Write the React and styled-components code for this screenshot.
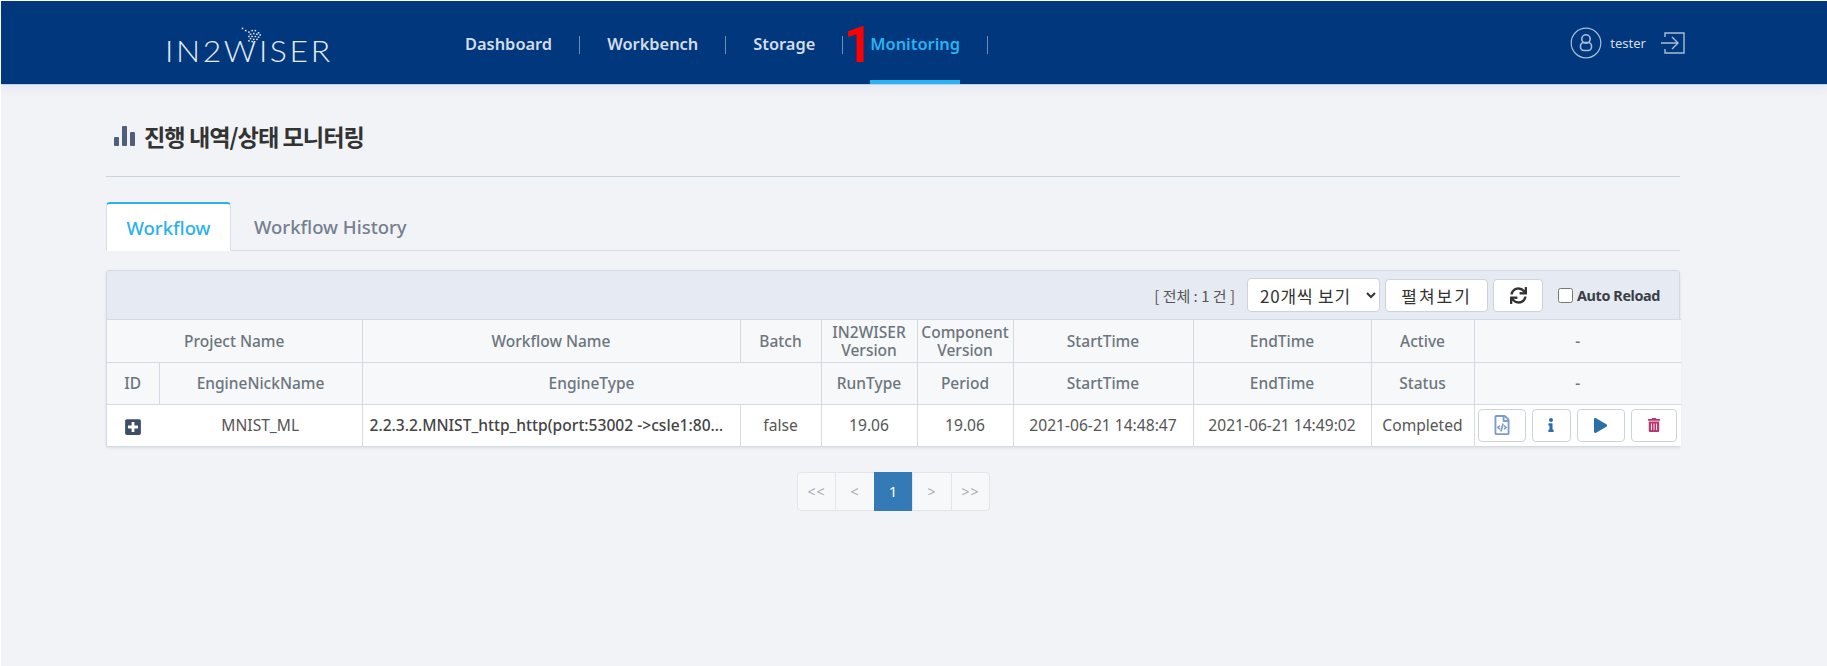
import React from 'react';
import styled, { createGlobalStyle } from 'styled-components';
import { FaSync, FaPlusSquare, FaInfo, FaPlay, FaTrashAlt, FaRegFileCode } from 'react-icons/fa';

const GlobalStyle = createGlobalStyle`
  html, body {
    margin: 0;
    padding: 0;
    background: #f1f3f7;
  }
  body {
    font-family: "Noto Sans", "Noto Sans CJK KR", sans-serif;
    font-size: 15px;
    color: #555;
  }
`;

const Page = styled.div`
  min-height: 666px;
  box-sizing: border-box;
  border-top: 1px solid #fff;
  border-left: 1px solid #fff;
`;

const Header = styled.header`
  height: 83px;
  background: #00377d;
  display: flex;
  align-items: stretch;
  padding-right: 142px;
  box-shadow: 0 1px 0 #b9d4ee, 0 6px 10px rgba(40, 60, 90, 0.05);
`;

const LogoBox = styled.div`
  width: 464px;
  padding-left: 164px;
  box-sizing: border-box;
  display: flex;
  align-items: center;
`;

const Logo = styled.div`
  position: relative;
  margin-top: 16px;
  color: #e6edf5;
  font-family: "Lato", sans-serif;
  font-weight: 300;
  font-size: 29px;
  line-height: 29px;
  letter-spacing: 2.4px;
  transform: scaleX(1.1);
  transform-origin: left center;
  white-space: nowrap;

  svg {
    position: absolute;
    left: 69px;
    top: -11px;
  }
`;

const Nav = styled.nav`
  display: flex;
  align-items: stretch;
  position: relative;
  flex: 1;
`;

const NavItem = styled.a`
  position: relative;
  display: flex;
  align-items: center;
  height: 100%;
  margin-right: 55px;
  padding-top: 6px;
  box-sizing: border-box;
  color: ${p => (p.$active ? '#2cb2f0' : '#d4dce8')};
  font-size: 16.4px;
  font-weight: 600;
  white-space: nowrap;
  border-bottom: 4px solid ${p => (p.$active ? '#2cb2f0' : 'transparent')};

  &::after {
    content: '';
    position: absolute;
    right: -28px;
    top: 35px;
    width: 1px;
    height: 18px;
    background: #6f8db4;
  }
`;

const Marker = styled.span`
  position: absolute;
  left: 379px;
  top: 14px;
  color: #f00;
  font-family: "Roboto", sans-serif;
  font-weight: 700;
  font-size: 50px;
  line-height: 60px;
`;

const UserBox = styled.div`
  display: flex;
  align-items: center;
  gap: 8px;
  color: #d4dce8;
  font-size: 13px;
`;

const Tester = styled.span`
  margin-right: 7px;
`;

const Main = styled.main`
  width: 1574px;
  margin-left: 105px;
`;

const TitleRow = styled.div`
  height: 93px;
  box-sizing: border-box;
  border-bottom: 1px solid #c9d4e0;
  display: flex;
  align-items: center;
  gap: 9px;
  padding: 11px 0 0 8px;
`;

const Title = styled.h2`
  margin: 0;
  font-family: "Noto Sans CJK KR", sans-serif;
  font-size: 23.2px;
  font-weight: 700;
  letter-spacing: -1px;
  color: #333;
`;

const Tabs = styled.div`
  display: flex;
  margin-top: 25px;
  height: 48px;
  border-bottom: 1px solid #d6dde6;
`;

const Tab = styled.div`
  box-sizing: border-box;
  height: ${p => (p.$active ? '49px' : '48px')};
  width: ${p => (p.$active ? '125px' : 'auto')};
  padding: 0 ${p => (p.$active ? '0' : '23px')};
  display: flex;
  align-items: center;
  justify-content: center;
  font-size: 18.5px;
  font-weight: 500;
  color: ${p => (p.$active ? '#2ab0ee' : '#757f8e')};
  background: ${p => (p.$active ? '#fff' : 'transparent')};
  border: ${p => (p.$active ? '1px solid #d6dde6' : 'none')};
  border-top: ${p => (p.$active ? '2px solid #2ab0ee' : 'none')};
  border-bottom: ${p => (p.$active ? '1px solid #fff' : 'none')};
  border-radius: 4px 4px 0 0;
`;

const Panel = styled.section`
  margin-top: 19px;
  border: 1px solid #d3dae3;
  border-radius: 3px 3px 0 0;
  box-shadow: 0 1px 3px rgba(60, 80, 110, 0.12);
  background: #fff;
`;

const Toolbar = styled.div`
  height: 48px;
  background: #e6eaf2;
  display: flex;
  align-items: center;
  justify-content: flex-end;
  padding-right: 19px;
`;

const Total = styled.span`
  font-family: "Noto Sans CJK KR", sans-serif;
  font-size: 15px;
  color: #555;
  margin-right: 12px;
`;

const PageSize = styled.select`
  width: 133px;
  height: 34px;
  border: 1px solid #ccd3dc;
  border-radius: 4px;
  background: #fff;
  padding: 0 0 0 8px;
  margin-right: 5px;
  font-family: "Noto Sans CJK KR", sans-serif;
  font-size: 17px;
  letter-spacing: 0.8px;
  color: #333;
`;

const ToolButton = styled.button`
  width: ${p => p.$width}px;
  height: 33px;
  border: 1px solid #ccd3dc;
  border-radius: 4px;
  background: #fff;
  padding: 0;
  margin-right: 5px;
  display: flex;
  align-items: center;
  justify-content: center;
  font-family: "Noto Sans CJK KR", sans-serif;
  font-size: 17px;
  letter-spacing: 2px;
  color: #333;
`;

const ReloadLabel = styled.label`
  display: flex;
  align-items: center;
  margin-left: 10px;
  font-size: 14.4px;
  font-weight: 700;
  letter-spacing: -0.4px;
  color: #3a3f46;

  input {
    width: 15px;
    height: 15px;
    margin: 0 4px 0 0;
  }
`;

const Table = styled.table`
  width: 100%;
  table-layout: fixed;
  border-collapse: collapse;
`;

const Th = styled.th`
  height: ${p => p.$height}px;
  padding: 1px 0 0;
  box-sizing: border-box;
  background: #f6f8f9;
  border: 1px solid #d3dae3;
  font-size: 15.5px;
  line-height: 17.5px;
  font-weight: 500;
  color: #6c757d;
  text-align: center;
  &:first-child { border-left: none; }
  &:last-child { border-right: none; }
`;

const Td = styled.td`
  height: 41px;
  padding: 0 ${p => (p.$left ? '13px' : '0')} 0 ${p => (p.$left ? '7px' : '0')};
  box-sizing: border-box;
  background: #fff;
  border: 1px solid #d3dae3;
  border-bottom: none;
  font-size: 15.6px;
  color: ${p => (p.$strong ? '#444' : '#555')};
  font-weight: ${p => (p.$strong ? 500 : 400)};
  text-align: ${p => (p.$left ? 'left' : 'center')};
  white-space: nowrap;
  overflow: hidden;
  text-overflow: ellipsis;
  &:first-child { border-left: none; border-right: none; }
  &:nth-child(2) { border-left: none; }
  &:last-child { border-right: none; }
`;

const Actions = styled.div`
  display: flex;
  align-items: center;
  gap: 6px;
  padding-left: 3px;
`;

const ActionButton = styled.button`
  width: ${p => p.$width}px;
  height: 33px;
  flex: none;
  padding: 0;
  border: 1px solid #ccd3dc;
  border-radius: 4px;
  background: #fff;
  display: flex;
  align-items: center;
  justify-content: center;
  color: ${p => p.$color};
`;

const Pagination = styled.ul`
  list-style: none;
  margin: 25px 0 0;
  padding: 0;
  display: flex;
  justify-content: center;
  transform: translateX(1px);
`;

const PageItem = styled.li`
  width: 39.5px;
  height: 39px;
  box-sizing: border-box;
  display: flex;
  align-items: center;
  justify-content: center;
  font-size: ${p => (p.$active ? '15px' : '14px')};
  letter-spacing: 1px;
  color: ${p => (p.$active ? '#fff' : '#a4abb5')};
  background: ${p => (p.$active ? '#337ab7' : '#f6f8f9')};
  border: 1px solid ${p => (p.$active ? '#337ab7' : '#e2e6eb')};
  margin-left: -1px;
  &:first-child { border-radius: 4px 0 0 4px; }
  &:last-child { border-radius: 0 4px 4px 0; }
`;

const LogoDots = () => (
  <svg width="19" height="20" viewBox="0 0 26 22" fill="#dfe8f2">
    {[[1, 1], [5, 4], [9, 6], [13, 4], [17, 4], [21, 7], [11, 9], [15, 8], [19, 9], [23, 10], [9, 12], [13, 12], [17, 12], [21, 13], [11, 15], [15, 16], [19, 16], [9, 18], [13, 19]].map(([x, y]) => (
      <rect key={`${x}-${y}`} x={x} y={y} width="2" height="2" />
    ))}
  </svg>
);

const UserIcon = () => (
  <svg width="32" height="32" viewBox="0 0 32 32" fill="none" stroke="#a9bdd6" strokeWidth="1.2">
    <circle cx="16" cy="16" r="14.8" />
    <circle cx="16" cy="12" r="4.2" strokeWidth="1.6" />
    <rect x="10.5" y="15.5" width="11" height="8" rx="3.4" strokeWidth="1.6" />
  </svg>
);

const ExitIcon = () => (
  <svg width="24" height="22" viewBox="0 0 24 22" fill="none" stroke="#a9bdd6" strokeWidth="1.4">
    <path d="M4 5V1h19v20H4v-4" />
    <path d="M0 11h17M11 5l6 6-6 6" />
  </svg>
);

const BarsIcon = () => (
  <svg width="21" height="21" viewBox="0 0 21 21" fill="#4f5f77">
    <rect x="0" y="12" width="5" height="9" rx="1" />
    <rect x="8" y="1" width="5" height="20" rx="1" />
    <rect x="16" y="7" width="5" height="14" rx="1" />
  </svg>
);

const headerRowOne = ['Workflow Name', 'Batch', 'IN2WISER Version', 'Component Version', 'StartTime', 'EndTime', 'Active', '-'];
const headerRowTwo = [
  ['ID', 1], ['EngineNickName', 1], ['EngineType', 2], ['RunType', 1], ['Period', 1],
  ['StartTime', 1], ['EndTime', 1], ['Status', 1], ['-', 1],
];
const colWidths = [52, 203, 378, 81, 96, 96, 180, 178, 103, 207];

export default function App() {
  return (
    <Page>
      <GlobalStyle />
      <Header>
        <LogoBox>
          <Logo>
            <LogoDots />
            IN2WISER
          </Logo>
        </LogoBox>
        <Nav>
          <NavItem>Dashboard</NavItem>
          <NavItem>Workbench</NavItem>
          <NavItem>Storage</NavItem>
          <NavItem $active>Monitoring</NavItem>
          <Marker>1</Marker>
        </Nav>
        <UserBox>
          <UserIcon />
          <Tester>tester</Tester>
          <ExitIcon />
        </UserBox>
      </Header>
      <Main>
        <TitleRow>
          <BarsIcon />
          <Title>진행 내역/상태 모니터링</Title>
        </TitleRow>
        <Tabs>
          <Tab $active>Workflow</Tab>
          <Tab>Workflow History</Tab>
        </Tabs>
        <Panel>
          <Toolbar>
            <Total>[ 전체 : 1 건 ]</Total>
            <PageSize defaultValue="20">
              <option value="20">20개씩 보기</option>
              <option value="50">50개씩 보기</option>
            </PageSize>
            <ToolButton $width={103}>펼쳐보기</ToolButton>
            <ToolButton $width={50}><FaSync size={17} /></ToolButton>
            <ReloadLabel>
              <input type="checkbox" />
              Auto Reload
            </ReloadLabel>
          </Toolbar>
          <Table>
            <colgroup>
              {colWidths.map((w, i) => <col key={i} style={{ width: w }} />)}
            </colgroup>
            <thead>
              <tr>
                <Th $height={43} colSpan={2}>Project Name</Th>
                {headerRowOne.map(label => <Th key={label} $height={43}>{label}</Th>)}
              </tr>
              <tr>
                {headerRowTwo.map(([label, span]) => <Th key={label} $height={42} colSpan={span}>{label}</Th>)}
              </tr>
            </thead>
            <tbody>
              <tr>
                <Td><FaPlusSquare size={18} color="#3d4f66" style={{ verticalAlign: 'middle' }} /></Td>
                <Td>MNIST_ML</Td>
                <Td $left $strong>2.2.3.2.MNIST_http_http(port:53002 -&gt;csle1:8080)</Td>
                <Td>false</Td>
                <Td>19.06</Td>
                <Td>19.06</Td>
                <Td>2021-06-21 14:48:47</Td>
                <Td>2021-06-21 14:49:02</Td>
                <Td>Completed</Td>
                <Td>
                  <Actions>
                    <ActionButton $width={48} $color="#7d9cc9"><FaRegFileCode size={20} /></ActionButton>
                    <ActionButton $width={39} $color="#2a6fa8"><FaInfo size={14} /></ActionButton>
                    <ActionButton $width={48} $color="#2a6fa8"><FaPlay size={15} /></ActionButton>
                    <ActionButton $width={46} $color="#b5376f"><FaTrashAlt size={14} /></ActionButton>
                  </Actions>
                </Td>
              </tr>
            </tbody>
          </Table>
        </Panel>
        <Pagination>
          <PageItem>&lt;&lt;</PageItem>
          <PageItem>&lt;</PageItem>
          <PageItem $active>1</PageItem>
          <PageItem>&gt;</PageItem>
          <PageItem>&gt;&gt;</PageItem>
        </Pagination>
      </Main>
    </Page>
  );
}
